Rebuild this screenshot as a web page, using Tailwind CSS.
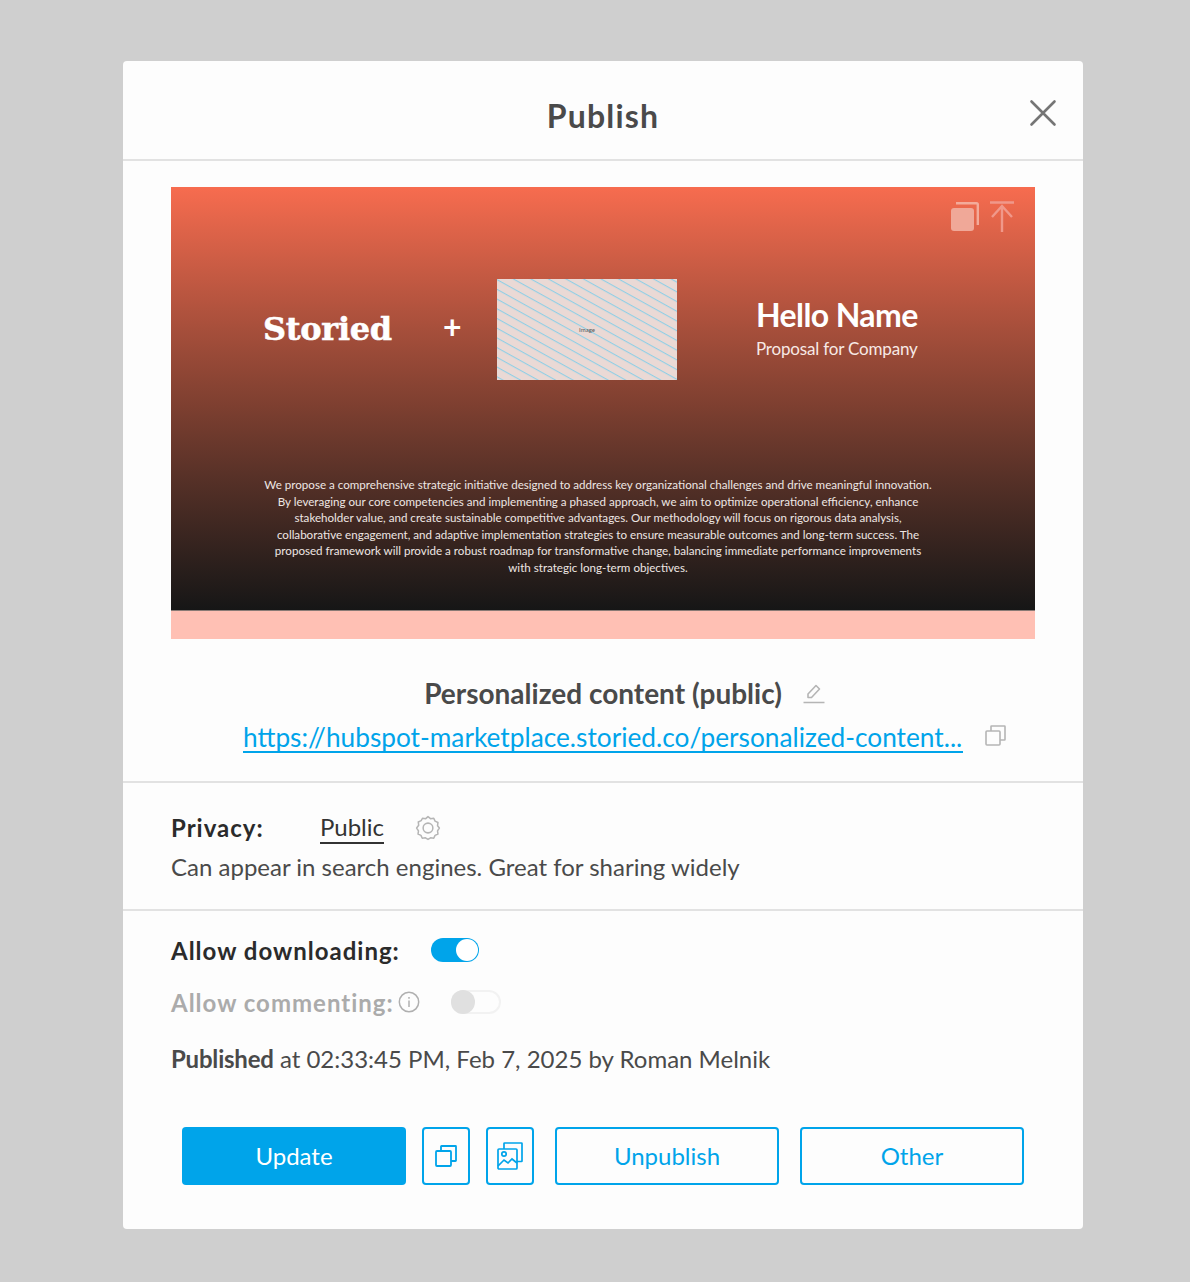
<!DOCTYPE html>
<html lang="en">
<head>
    <meta charset="UTF-8">
    <title>Publish</title>
    <script src="https://cdn.jsdelivr.net/npm/@tailwindcss/browser@4"></script>
</head>
<body class="bg-[#cfcfcf] font-['Lato',sans-serif] text-[#4a4a4a]">
    <div class="h-[1282px] pt-[61px] pl-[123px]">
        <div class="w-[960px] h-[1168px] bg-[#fdfdfd] rounded-[4px] flex flex-col">
            <header class="relative h-[100px] shrink-0 border-b-2 border-[#e2e2e2] flex justify-center pt-[34px]">
                <h1 class="text-[32px] leading-[42px] font-bold tracking-[1.2px]">Publish</h1>
                <button class="absolute left-[906px] top-[38px]">
                    <svg width="28" height="28" viewBox="0 0 28 28" fill="none" stroke="#757575" stroke-width="2.6" stroke-linecap="round"><path d="M2.500 2.500 L25.500 25.500 M25.500 2.500 L2.500 25.500"/></svg>
                </button>
            </header>

            <section class="h-[622px] shrink-0 border-b-2 border-[#e2e2e2] px-[48px] pt-[26px]">
                <div class="w-[864px] h-[452px] bg-[#ffc0b4] flex flex-col">
                    <div class="relative h-[424px] border-b border-[#8a7a75] bg-gradient-to-b from-[#f76c4f] via-[#7d3f30] via-52% to-[#161616] text-white">
                        <div class="absolute right-[21px] top-[14px] flex gap-[11px]">
                            <svg width="28" height="30" viewBox="0 0 28 30" fill="none"><path d="M5 2.200h20.500a1.300 1.300 0 0 1 1.300 1.300V24" stroke="#f3ab9a" stroke-width="2.400"/><rect x="0" y="7" width="23" height="23" rx="3" fill="#f0a898"/></svg>
                            <svg width="24" height="31" viewBox="0 0 24 31" fill="none" stroke="#f0988a" stroke-width="2.400"><path d="M0 1.500h24M12 5v26M2 16L12 5l10 11"/></svg>
                        </div>
                        <div class="flex h-[193px] pl-[92px] pt-[92px]">
                            <div class="w-[180px] pt-[35px] font-['DejaVu_Serif',serif] font-bold text-[32px] leading-[30px] tracking-[-0.3px] [-webkit-text-stroke:0.5px_white]">Storied</div>
                            <div class="w-[54px] pt-[29px] font-bold text-[32px] leading-[38px]">+</div>
                            <div class="relative w-[180px] h-[101px] bg-[#ead9d5] flex items-center justify-center overflow-hidden">
                                <svg class="absolute inset-0" width="180" height="101"><defs><pattern id="hatch" width="8.500" height="8.500" patternUnits="userSpaceOnUse" patternTransform="rotate(29)"><rect width="8.500" height="1.100" fill="#8fcfe6"/></pattern></defs><rect width="180" height="101" fill="url(#hatch)"/></svg>
                                <span class="relative text-[6px] leading-[8px] text-[#555]">Image</span>
                            </div>
                            <div class="pl-[79px] pt-[18px]">
                                <div class="text-[32px] leading-[36px] font-bold tracking-[-0.6px]">Hello Name</div>
                                <div class="text-[17px] leading-[20px] mt-[6px] tracking-[-0.18px] text-[#f7e9e5]">Proposal for Company</div>
                            </div>
                        </div>
                        <p class="mt-[97px] pr-[10px] text-center text-[11.6px] leading-[16.5px] text-[#eee6e3]">
                            We propose a comprehensive strategic initiative designed to address key organizational challenges and drive meaningful innovation.<br>
                            By leveraging our core competencies and implementing a phased approach, we aim to optimize operational efficiency, enhance<br>
                            stakeholder value, and create sustainable competitive advantages. Our methodology will focus on rigorous data analysis,<br>
                            collaborative engagement, and adaptive implementation strategies to ensure measurable outcomes and long-term success. The<br>
                            proposed framework will provide a robust roadmap for transformative change, balancing immediate performance improvements<br>
                            with strategic long-term objectives.
                        </p>
                    </div>
                </div>

                <div class="mt-[36px] flex justify-center items-center h-[36px] pl-[43px]">
                    <span class="text-[28px] font-bold leading-[36px]">Personalized content (public)</span>
                    <svg class="ml-[21px]" width="22" height="22" viewBox="0 0 22 22" fill="none" stroke="#b5b5b5" stroke-width="1.6"><path d="M5 15.500V12L13 3.500 16.500 7 8.500 15.500ZM0.500 20.500h21" stroke-linejoin="round"/></svg>
                </div>
                <div class="mt-[8px] flex h-[38px] items-start pl-[72px]">
                    <a class="mt-[5px] text-[26.25px] leading-[27px] text-[#00a4ea] border-b-2 border-[#00a4ea] w-[720px] whitespace-nowrap">https://hubspot-marketplace.storied.co/personalized-content...</a>
                    <svg class="ml-[22px] mt-[6px]" width="21" height="21" viewBox="0 0 21 21" fill="none" stroke="#b5b5b5" stroke-width="1.6"><rect x="1" y="6" width="14" height="14" rx="1"/><path d="M6 6V1.500a.5.5 0 0 1 .5-.5h13a.5.5 0 0 1 .5.5v13a.5.5 0 0 1-.5.5H15"/></svg>
                </div>
            </section>

            <section class="h-[128px] shrink-0 border-b-2 border-[#e2e2e2] px-[48px] pt-[27px]">
                <div class="flex items-center h-[36px]">
                    <span class="w-[149px] text-[24px] font-bold text-[#2b2b2b] tracking-[1px]">Privacy:</span>
                    <span class="text-[24px] leading-[30px] text-[#333] border-b-2 border-[#333]">Public</span>
                    <svg class="ml-[31px]" width="26" height="26" viewBox="0 0 24 24" fill="none" stroke="#b5b5b5" stroke-width="1.4"><path d="M12 1.500l2.300 1.900 3-.4 1.200 2.700 2.700 1.200-.4 3L22.500 12l-1.700 2.600.4 3-2.700 1.200-1.200 2.700-3-.4-2.300 1.400-2.300-1.400-3 .4-1.200-2.700-2.700-1.200.4-3L1.500 12l1.900-2.600-.4-3 2.700-1.200L6.900 3l3 .4z" stroke-linejoin="round"/><circle cx="12" cy="12" r="4.500"/></svg>
                </div>
                <p class="mt-[3px] text-[24px] leading-[36px]">Can appear in search engines. Great for sharing widely</p>
            </section>

            <section class="grow px-[48px] pt-[22px]">
                <div class="flex items-center h-[36px]">
                    <span class="w-[260px] text-[24px] font-bold text-[#2b2b2b] tracking-[1px]">Allow downloading:</span>
                    <span class="w-[48px] h-[24px] rounded-full bg-[#00a4ea] flex justify-end items-center pr-[1px] -mt-[3px]"><span class="w-[22px] h-[22px] rounded-full bg-white"></span></span>
                </div>
                <div class="flex items-center h-[36px] mt-[16px]">
                    <span class="text-[24px] font-bold text-[#ababab] tracking-[1px]">Allow commenting:</span>
                    <svg class="ml-[4px] -mt-[2px]" width="22" height="22" viewBox="0 0 22 22" fill="none" stroke="#b0b0b0" stroke-width="1.500"><circle cx="11" cy="11" r="9.700"/><path d="M11 9.500v6.500M11 6v1.800"/></svg>
                    <span class="ml-[31px] -mt-[3px] w-[50px] h-[24px] rounded-full border-2 border-[#f2f2f2] relative"><span class="absolute -left-[2px] -top-[2px] w-[24px] h-[24px] rounded-full bg-[#e0e0e0]"></span></span>
                </div>
                <p class="mt-[20px] text-[24px] leading-[36px]"><b class="tracking-[-0.2px]">Published</b> at 02:33:45 PM, Feb 7, 2025 by Roman Melnik</p>

                <div class="mt-[50px] ml-[11px] flex">
                    <button class="w-[224px] h-[58px] bg-[#00a4ea] text-white text-[24px] rounded-[4px]">Update</button>
                    <button class="ml-[16px] w-[48px] h-[58px] border-2 border-[#00a4ea] rounded-[4px] flex items-center justify-center">
                        <svg width="22" height="22" viewBox="0 0 22 22" fill="none" stroke="#00a4ea" stroke-width="1.800"><rect x="1" y="6" width="15" height="15" rx="1"/><path d="M6 6V1.500a.5.5 0 0 1 .5-.5h14a.5.5 0 0 1 .5.5v14a.5.5 0 0 1-.5.5H16"/></svg>
                    </button>
                    <button class="ml-[16px] w-[48px] h-[58px] border-2 border-[#00a4ea] rounded-[4px] flex items-center justify-center">
                        <svg width="26" height="28" viewBox="0 0 26 28" fill="none" stroke="#00a4ea" stroke-width="1.700"><path d="M7 7V1.500a.5.5 0 0 1 .5-.5h17a.5.5 0 0 1 .5.5V19a.5.5 0 0 1-.5.5H20"/><rect x="1" y="7" width="19" height="20" rx="1"/><circle cx="7" cy="12" r="2.200"/><path d="M1 24l6-6 4 3 4-4 5 4"/></svg>
                    </button>
                    <button class="ml-[21px] w-[224px] h-[58px] border-2 border-[#00a4ea] text-[#00a4ea] text-[24px] rounded-[4px]">Unpublish</button>
                    <button class="ml-[21px] w-[224px] h-[58px] border-2 border-[#00a4ea] text-[#00a4ea] text-[24px] rounded-[4px]">Other</button>
                </div>
            </section>
        </div>
    </div>
</body>
</html>
